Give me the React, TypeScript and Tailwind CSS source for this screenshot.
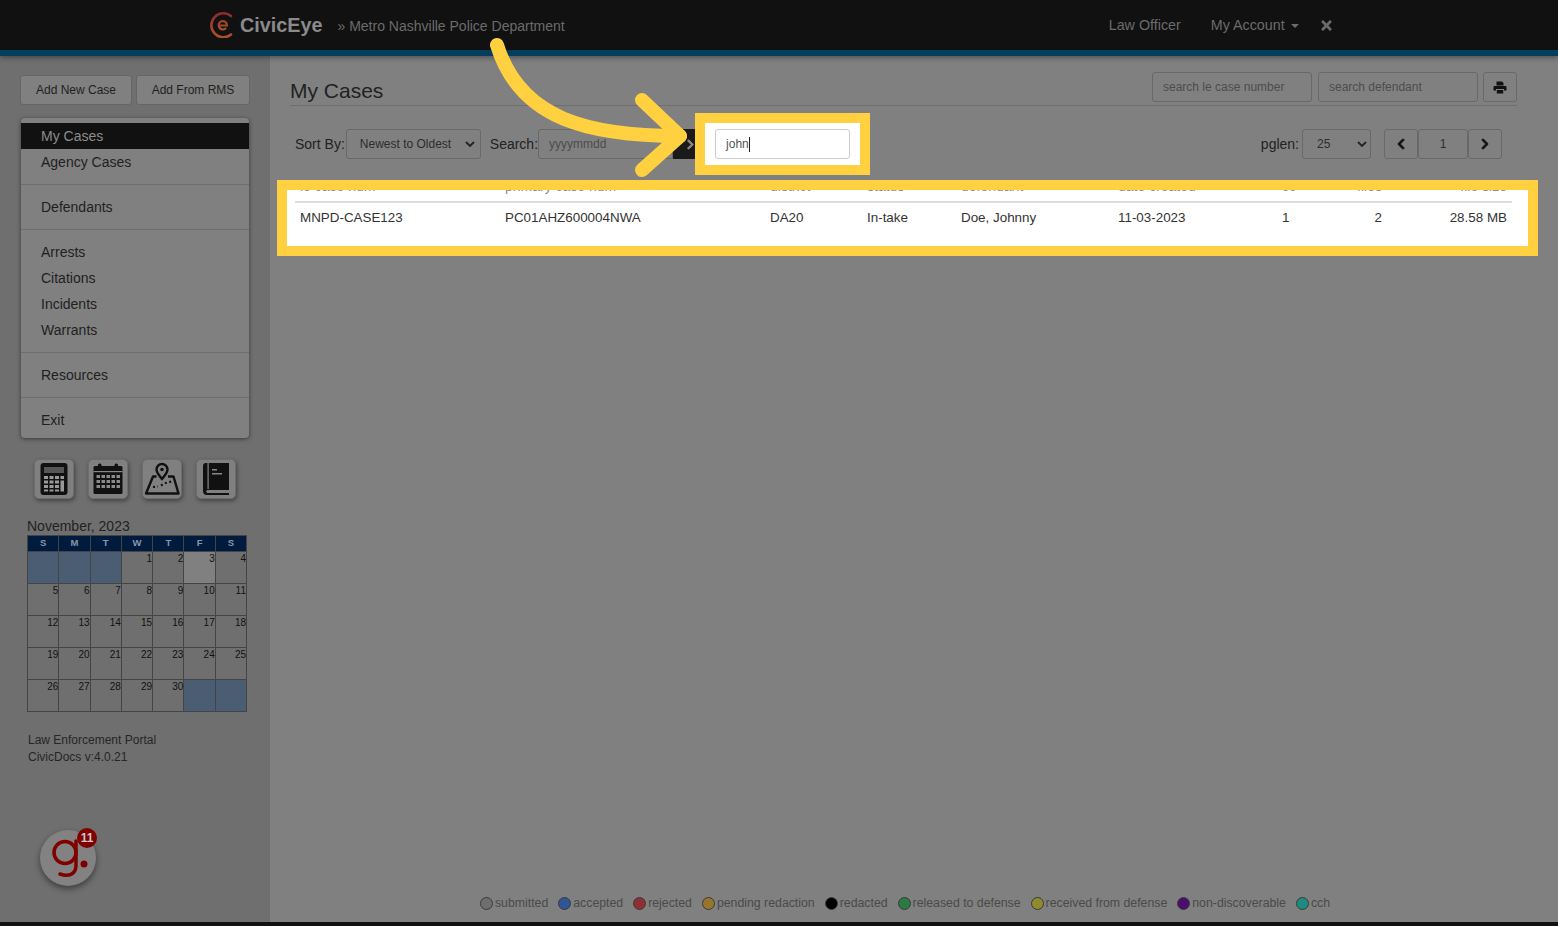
import { FaChevronLeft, FaChevronRight, FaTimes } from "react-icons/fa";

const menuGroups = [
  ["Agency Cases"],
  ["Defendants"],
  ["Arrests", "Citations", "Incidents", "Warrants"],
  ["Resources"],
  ["Exit"],
];

const legend = [
  { label: "submitted", color: "bg-[#6e6e6e]" },
  { label: "accepted", color: "bg-[#2f5597]" },
  { label: "rejected", color: "bg-[#8f2f33]" },
  { label: "pending redaction", color: "bg-[#96752d]" },
  { label: "redacted", color: "bg-black" },
  { label: "released to defense", color: "bg-[#2b7a44]" },
  { label: "received from defense", color: "bg-[#8f8a2b]" },
  { label: "non-discoverable", color: "bg-[#4b0f6b]" },
  { label: "cch", color: "bg-[#1f8a80]" },
];

const weekDays = ["S", "M", "T", "W", "T", "F", "S"];
const calendarDays = [
  null, null, null, 1, 2, 3, 4,
  5, 6, 7, 8, 9, 10, 11,
  12, 13, 14, 15, 16, 17, 18,
  19, 20, 21, 22, 23, 24, 25,
  26, 27, 28, 29, 30, null, null,
];

const columns = "grid grid-cols-[205px_265px_97px_94px_157px_164px_50px_50px_1fr] whitespace-nowrap";

const CivicLogo = () => (
  <svg width="26" height="26" viewBox="0 0 26 26" fill="none">
    <defs>
      <linearGradient id="civic" x1="0" y1="0" x2="0" y2="1">
        <stop offset="0" stopColor="#8e2a30" />
        <stop offset="1" stopColor="#a9522a" />
      </linearGradient>
      <linearGradient id="civicInner" gradientUnits="userSpaceOnUse" x1="0" y1="8" x2="0" y2="19">
        <stop offset="0" stopColor="#96402c" />
        <stop offset="1" stopColor="#a9522a" />
      </linearGradient>
    </defs>
    <path d="M22 4A12 12 0 1 0 22 22.500" stroke="url(#civic)" strokeWidth="2.600" strokeLinecap="round" />
    <path d="M10 13.500H18A4.200 4.200 0 1 0 16.500 16.500" stroke="url(#civicInner)" strokeWidth="2.200" strokeLinecap="round" />
  </svg>
);

const PrintIcon = () => (
  <svg width="14" height="13" viewBox="0 0 14 13" fill="#111">
    <path d="M3.500 0.500H9L10.500 2V4.500H3.500Z" />
    <path d="M1.500 5H12.500A1 1 0 0 1 13.500 6V9.500H11V8H3V9.500H0.500V6A1 1 0 0 1 1.500 5Z" />
    <rect x="3.800" y="9" width="6.400" height="3.500" />
  </svg>
);

const CalculatorIcon = () => (
  <svg width="30" height="34" viewBox="0 0 30 34">
    <rect x="1.500" y="1" width="27" height="32" rx="3" fill="#111" />
    <rect x="5" y="5" width="20" height="6" fill="#555" />
    <path d="M5 14h4v3H5zM10.500 14h4v3h-4zM16 14h4v3h-4zM21.500 14H25v3h-3.500zM5 18.500h4v3H5zM10.500 18.500h4v3h-4zM16 18.500h4v3h-4zM5 23h4v3H5zM10.500 23h4v3h-4zM16 23h4v3h-4zM5 27.500h4v2H5zM10.500 27.500h4v2h-4zM16 27.500h4v2h-4zM21.500 18.500H25v11h-3.500z" fill="#9a9a9a" />
  </svg>
);

const CalendarIcon = () => (
  <svg width="30" height="32" viewBox="0 0 30 32">
    <rect x="0.500" y="3" width="29" height="28" rx="1.500" fill="#111" />
    <rect x="5" y="0.500" width="3.500" height="6" rx="1.500" fill="#111" />
    <rect x="21.500" y="0.500" width="3.500" height="6" rx="1.500" fill="#111" />
    <rect x="0.500" y="8" width="29" height="1.200" fill="#888" />
    <path d="M3.500 12h3.500v3H3.500zM8.500 12h3.500v3H8.500zM13.500 12h3.500v3h-3.500zM18.500 12h3.500v3h-3.500zM23.500 12H27v3h-3.500zM3.500 17h3.500v3H3.500zM8.500 17h3.500v3H8.500zM13.500 17h3.500v3h-3.500zM18.500 17h3.500v3h-3.500zM23.500 17H27v3h-3.500zM3.500 22h3.500v3H3.500zM8.500 22h3.500v3H8.500zM13.500 22h3.500v3h-3.500zM18.500 22h3.500v3h-3.500zM23.500 22H27v3h-3.500z" fill="#8a8a8a" />
  </svg>
);

const MapIcon = () => (
  <svg width="36" height="34" viewBox="0 0 36 34" fill="none" stroke="#111">
    <path d="M12.500 14.500H9L2 31.500H34.500L29.500 14.500H24" strokeWidth="2.400" strokeLinejoin="round" />
    <path d="M18 17C15 13.500 12.500 10.500 12.500 7.500A5.500 5.500 0 0 1 23.500 7.500C23.500 10.500 21 13.500 18 17Z" fill="#808080" strokeWidth="2.400" />
    <circle cx="18" cy="7.500" r="1.800" fill="#111" stroke="none" />
    <path d="M9 25L14 24.500M17 23.500L20 21.500L24 20.500L29 19" strokeWidth="2.200" strokeDasharray="2 2.500" />
  </svg>
);

const BookIcon = () => (
  <svg width="28" height="34" viewBox="0 0 28 34">
    <path d="M4 1H27V28H5A2 2 0 0 0 5 31H27V33H5A4 4 0 0 1 1 29V4A3 3 0 0 1 4 1Z" fill="#111" />
    <rect x="5.500" y="1" width="1.200" height="26" fill="#888" />
    <rect x="10" y="7" width="5" height="1.500" fill="#888" />
    <rect x="10" y="11" width="10" height="1.500" fill="#888" />
  </svg>
);

const GetLogo = () => (
  <div className="relative flex h-14 w-14 items-center justify-center rounded-full bg-[#828282] shadow-[0_3px_6px_rgba(0,0,0,0.45)]">
    <svg width="40" height="44" viewBox="0 0 40 44" fill="none" stroke="#800000">
      <circle cx="17" cy="16.500" r="11" strokeWidth="3.500" />
      <path d="M28 5V29C28 39 20 41 12 38" strokeWidth="3.500" strokeLinecap="round" />
      <circle cx="36" cy="28" r="3.500" fill="#800000" stroke="none" />
    </svg>
    <span className="absolute -top-[2px] -right-px flex h-5 w-5 items-center justify-center rounded-full bg-[#800000] text-[12px] font-bold text-[#c9c9c9]">
      11
    </span>
  </div>
);

const App = () => {
  return (
    <div className="flex h-[926px] flex-col overflow-hidden bg-[#808080] font-['Liberation_Sans',Arial,sans-serif] text-[#1f1f1f]">
      <header className="z-10 flex h-14 shrink-0 items-center border-b-[6px] border-[#033e5f] bg-[#111111] pl-[209px] shadow-[0_2px_5px_rgba(0,0,0,0.35)]">
        <CivicLogo />
        <span className="ml-[5px] mt-[2px] text-[19.800px] font-bold text-[#8a8a8a]">CivicEye</span>
        <span className="ml-[15px] mt-[2px] text-[14px] text-[#6b6b6b]">» Metro Nashville Police Department</span>
        <span className="ml-[544px] mt-px text-[14.300px] text-[#6b6b6b]">Law Officer</span>
        <span className="ml-[30px] mt-px flex items-center text-[14.300px] text-[#6b6b6b]">
          My Account
          <span className="ml-[6px] h-0 w-0 border-x-4 border-t-4 border-x-transparent border-t-[#6b6b6b]" />
        </span>
        <FaTimes className="ml-[20px] text-[15px] text-[#6b6b6b]" />
      </header>

      <div className="flex min-h-0 flex-1">
        <aside className="flex w-[270px] shrink-0 flex-col bg-[#6f6f6f] px-5 pt-[19px]">
          <div className="flex gap-1">
            <button className="h-[30px] w-[112px] rounded-[3px] border border-[#666] bg-[#808080] text-[12px] text-[#1f1f1f]">Add New Case</button>
            <button className="h-[30px] flex-1 rounded-[3px] border border-[#666] bg-[#808080] text-[12px] text-[#1f1f1f]">Add From RMS</button>
          </div>

          <nav className="mx-px mt-[13px] h-[320px] rounded-[4px] bg-[#808080] pt-[5px] text-[14px] shadow-[0_1px_4px_rgba(0,0,0,0.5)]">
            <div className="flex h-[26px] items-center bg-[#111111] pl-[20px] text-[#8c8c8c]">My Cases</div>
            {menuGroups.map((group, i) => (
              <div key={i} className={i === 0 ? "pb-[9px]" : "border-t border-[#6d6d6d] py-[9px]"}>
                {group.map((item) => (
                  <div key={item} className="flex h-[26px] items-center pl-[20px]">{item}</div>
                ))}
              </div>
            ))}
          </nav>

          <div className="mt-[21px] flex gap-[14px] pl-[14px]">
            {[<CalculatorIcon />, <CalendarIcon />, <MapIcon />, <BookIcon />].map((icon, i) => (
              <div key={i} className="flex h-10 w-10 items-center justify-center rounded-[5px] border border-[#6d6d6d] bg-[#808080] shadow-[1px_2px_4px_rgba(0,0,0,0.4)]">
                {icon}
              </div>
            ))}
          </div>

          <div className="mt-[19px] pl-[7px] text-[14px] leading-4 text-[#222]">November, 2023</div>
          <div className="ml-[7px] mt-px w-[220px] border-l border-t border-[#444]">
            <div className="grid grid-cols-7 bg-[#001b3d]">
              {weekDays.map((d, i) => (
                <div key={i} className="flex h-4 items-center justify-center border-b border-r border-[#444] text-[9.500px] font-bold text-[#8a97a6]">{d}</div>
              ))}
            </div>
            <div className="grid grid-cols-7">
              {calendarDays.map((d, i) => (
                <div
                  key={i}
                  className={`h-8 border-b border-r border-[#444] text-right text-[10px] leading-[13px] text-[#111] ${d === null ? "bg-[#4a5d73]" : d === 3 ? "bg-[#808080]" : ""}`}
                >
                  {d}
                </div>
              ))}
            </div>
          </div>

          <div className="mt-5 pl-[8px] text-[12px] leading-[17px] text-[#262626]">
            <div>Law Enforcement Portal</div>
            <div>CivicDocs v:4.0.21</div>
          </div>

          <div className="mt-[64px] pl-5">
            <GetLogo />
          </div>
        </aside>

        <main className="flex min-w-0 flex-1 flex-col">
          <div className="ml-[20px] mr-[41px] mt-4 flex h-[34px] items-start justify-between border-b border-[#6f6f6f]">
            <h1 className="mt-[5px] text-[21px] leading-[28px] text-[#222]">My Cases</h1>
            <div className="flex gap-[6px]">
              <input readOnly placeholder="search le case number" className="h-[30px] w-40 rounded-[3px] border border-[#696969] bg-[#808080] px-[10px] text-[12px] placeholder:text-[#4d4d4d]" />
              <input readOnly placeholder="search defendant" className="h-[30px] w-40 rounded-[3px] border border-[#696969] bg-[#808080] px-[10px] text-[12px] placeholder:text-[#4d4d4d]" />
              <button className="-ml-px flex h-[30px] w-[34px] items-center justify-center rounded-[3px] border border-[#696969]">
                <PrintIcon />
              </button>
            </div>
          </div>

          <div className="mt-[7px] flex h-[62px] items-center pl-[25px] pr-[56px] text-[14px] text-[#222]">
            <span>Sort By:</span>
            <div className="ml-px flex h-[30px] w-[135px] items-center justify-between rounded-[3px] border border-[#696969] pl-[13px] pr-[5px] text-[12px] text-[#2d2d2d]">
              Newest to Oldest
              <svg width="10" height="6" viewBox="0 0 10 6" fill="none" stroke="#222" strokeWidth="1.800"><path d="M1 1l4 4 4-4" /></svg>
            </div>
            <span className="ml-[9px]">Search:</span>
            <input readOnly placeholder="yyyymmdd" className="h-[30px] w-[135px] rounded-l-[3px] border border-[#696969] bg-[#808080] px-[10px] text-[12px] placeholder:text-[#4d4d4d]" />
            <button className="flex h-[30px] w-[34px] items-center justify-center rounded-r-[3px] bg-[#1a1a1a] text-[11px] text-[#8a8a8a]">
              <FaChevronRight className="stroke-current stroke-[40]" />
            </button>
            <div className="z-10 -ml-[12px] flex h-[62px] w-[175px] items-center border-[10px] border-[#ffd040] bg-white pl-[10px]">
              <div className="flex h-[30px] w-[135px] items-center rounded-[3px] border border-[#cccccc] pl-[10px] text-[12px] text-[#555]">
                john<span className="h-[15px] w-px bg-[#222]" />
              </div>
            </div>
            <span className="ml-auto">pglen:</span>
            <div className="ml-[3px] flex h-[30px] w-[69px] items-center justify-between rounded-[3px] border border-[#696969] pl-[14px] pr-[3px] text-[12px] text-[#2d2d2d]">
              25
              <svg width="10" height="6" viewBox="0 0 10 6" fill="none" stroke="#222" strokeWidth="1.800"><path d="M1 1l4 4 4-4" /></svg>
            </div>
            <div className="ml-[13px] flex h-[30px] text-[12px]">
              <button className="flex w-[34px] items-center justify-center rounded-[3px] border border-[#696969] text-[#111]"><FaChevronLeft className="stroke-current stroke-[40]" /></button>
              <div className="flex w-[50px] items-center justify-center rounded-[3px] border border-[#696969] text-[#2d2d2d]">1</div>
              <button className="flex w-[34px] items-center justify-center rounded-[3px] border border-[#696969] text-[#111]"><FaChevronRight className="stroke-current stroke-[40]" /></button>
            </div>
          </div>

          <section className="ml-[7px] mt-[5px] h-[76px] w-[1261px] overflow-hidden border-[10px] border-[#ffd040] bg-white text-[13.400px] leading-4 text-[#333]">
            <div className={`${columns} -mt-[12px] ml-[8px] mr-[16px] h-[25px] border-b-2 border-[#dddddd] px-[5px] text-[14px] text-[#8d8d8d]`}>
              <span>le case num</span>
              <span>primary case num</span>
              <span>district</span>
              <span>status</span>
              <span>defendant</span>
              <span>date created</span>
              <span>cc</span>
              <span className="text-right">files</span>
              <span className="text-right">file size</span>
            </div>
            <div className={`${columns} ml-[8px] mr-[16px] px-[5px] pt-[7px]`}>
              <span>MNPD-CASE123</span>
              <span>PC01AHZ600004NWA</span>
              <span>DA20</span>
              <span>In-take</span>
              <span>Doe, Johnny</span>
              <span>11-03-2023</span>
              <span>1</span>
              <span className="text-right">2</span>
              <span className="text-right">28.58 MB</span>
            </div>
          </section>

          <footer className="mt-auto flex h-[28px] items-start justify-center gap-[10px] pr-[18px] text-[12.300px] text-[#4a4a4a]">
            {legend.map((item) => (
              <span key={item.label} className="flex items-center gap-[2px]">
                <span className={`h-[13px] w-[13px] rounded-full border border-[#3a3a3a] ${item.color}`} />
                {item.label}
              </span>
            ))}
          </footer>
        </main>
      </div>

      <div className="h-1 shrink-0 bg-[#111111]" />

      <svg className="pointer-events-none absolute left-0 top-0 z-20" width="800" height="200" fill="none" stroke="#ffd040" strokeWidth="14" strokeLinecap="round" strokeLinejoin="round">
        <path d="M497 45C520 120 590 136 680 136" />
        <path d="M642 100L680 136L642 170" />
      </svg>
    </div>
  );
};

export default App;
